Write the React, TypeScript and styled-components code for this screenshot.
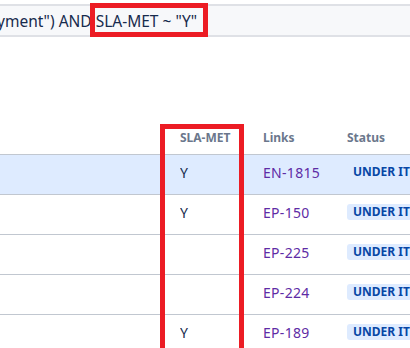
import React from "react";
import styled, { createGlobalStyle } from "styled-components";

const GlobalStyle = createGlobalStyle`
  html, body {
    margin: 0;
    padding: 0;
    background: #ffffff;
    font-family: "Noto Sans", "Open Sans", sans-serif;
    overflow: hidden;
  }
`;

const Page = styled.div`
  position: relative;
  width: 410px;
  height: 348px;
  overflow: hidden;
  background: #ffffff;
`;

const QueryBar = styled.div`
  margin-top: 4px;
  height: 29px;
  border-top: 2px solid #dfe1e6;
  border-bottom: 2px solid #dfe1e6;
  background: #f7f8fa;
  display: flex;
  align-items: center;
  overflow: hidden;
  white-space: nowrap;
`;

const QueryText = styled.span`
  margin-left: -3px;
  font-size: 15.5px;
  color: #172b4d;
`;

const Table = styled.div`
  margin-top: 80px;
  display: grid;
  grid-template-columns: 180px 83px 84px 1fr;
`;

const HeadCell = styled.div`
  height: 38px;
  display: flex;
  align-items: center;
  padding-top: 4px;
  box-sizing: border-box;
  font-size: 12px;
  font-weight: 700;
  color: #6b778c;
  border-bottom: 1px solid #c1c7d0;
  white-space: nowrap;
`;

const Cell = styled.div<{ $active?: boolean }>`
  height: 40px;
  box-sizing: border-box;
  display: flex;
  align-items: center;
  padding-bottom: 5px;
  border-bottom: 1px solid #c1c7d0;
  background: ${(p) => (p.$active ? "#deebff" : "#ffffff")};
  font-size: 14px;
  color: #172b4d;
  white-space: nowrap;
  overflow: hidden;
`;

const IssueLink = styled.a`
  color: #5e2ca5;
  text-decoration: none;
  letter-spacing: 0.3px;
`;

const Lozenge = styled.span`
  display: inline-block;
  padding: 0 6px;
  height: 16px;
  line-height: 16px;
  border-radius: 3px;
  background: #deebff;
  color: #0747a6;
  font-size: 12px;
  font-weight: 700;
`;

const Marker = styled.div<{ $x: number; $y: number; $w: number; $h: number }>`
  position: absolute;
  left: ${(p) => p.$x}px;
  top: ${(p) => p.$y}px;
  width: ${(p) => p.$w}px;
  height: ${(p) => p.$h}px;
  box-sizing: border-box;
  border: 5px solid #ec1c24;
  pointer-events: none;
`;

const rows = [
  { sla: "Y", link: "EN-1815", active: true },
  { sla: "Y", link: "EP-150" },
  { sla: "", link: "EP-225" },
  { sla: "", link: "EP-224" },
  { sla: "Y", link: "EP-189" },
];

export default function App() {
  return (
    <Page>
      <GlobalStyle />
      <QueryBar>
        <QueryText>yment") AND SLA-MET ~ "Y"</QueryText>
      </QueryBar>
      <Table>
        <HeadCell />
        <HeadCell>SLA-MET</HeadCell>
        <HeadCell>Links</HeadCell>
        <HeadCell>Status</HeadCell>
        {rows.map((r) => (
          <React.Fragment key={r.link}>
            <Cell $active={r.active} />
            <Cell $active={r.active}>{r.sla}</Cell>
            <Cell $active={r.active}>
              <IssueLink href="#">{r.link}</IssueLink>
            </Cell>
            <Cell $active={r.active}>
              <Lozenge>UNDER IT</Lozenge>
            </Cell>
          </React.Fragment>
        ))}
      </Table>
      <Marker $x={90} $y={3} $w={118} $h={34} />
      <Marker $x={160} $y={124} $w={84} $h={230} />
    </Page>
  );
}
